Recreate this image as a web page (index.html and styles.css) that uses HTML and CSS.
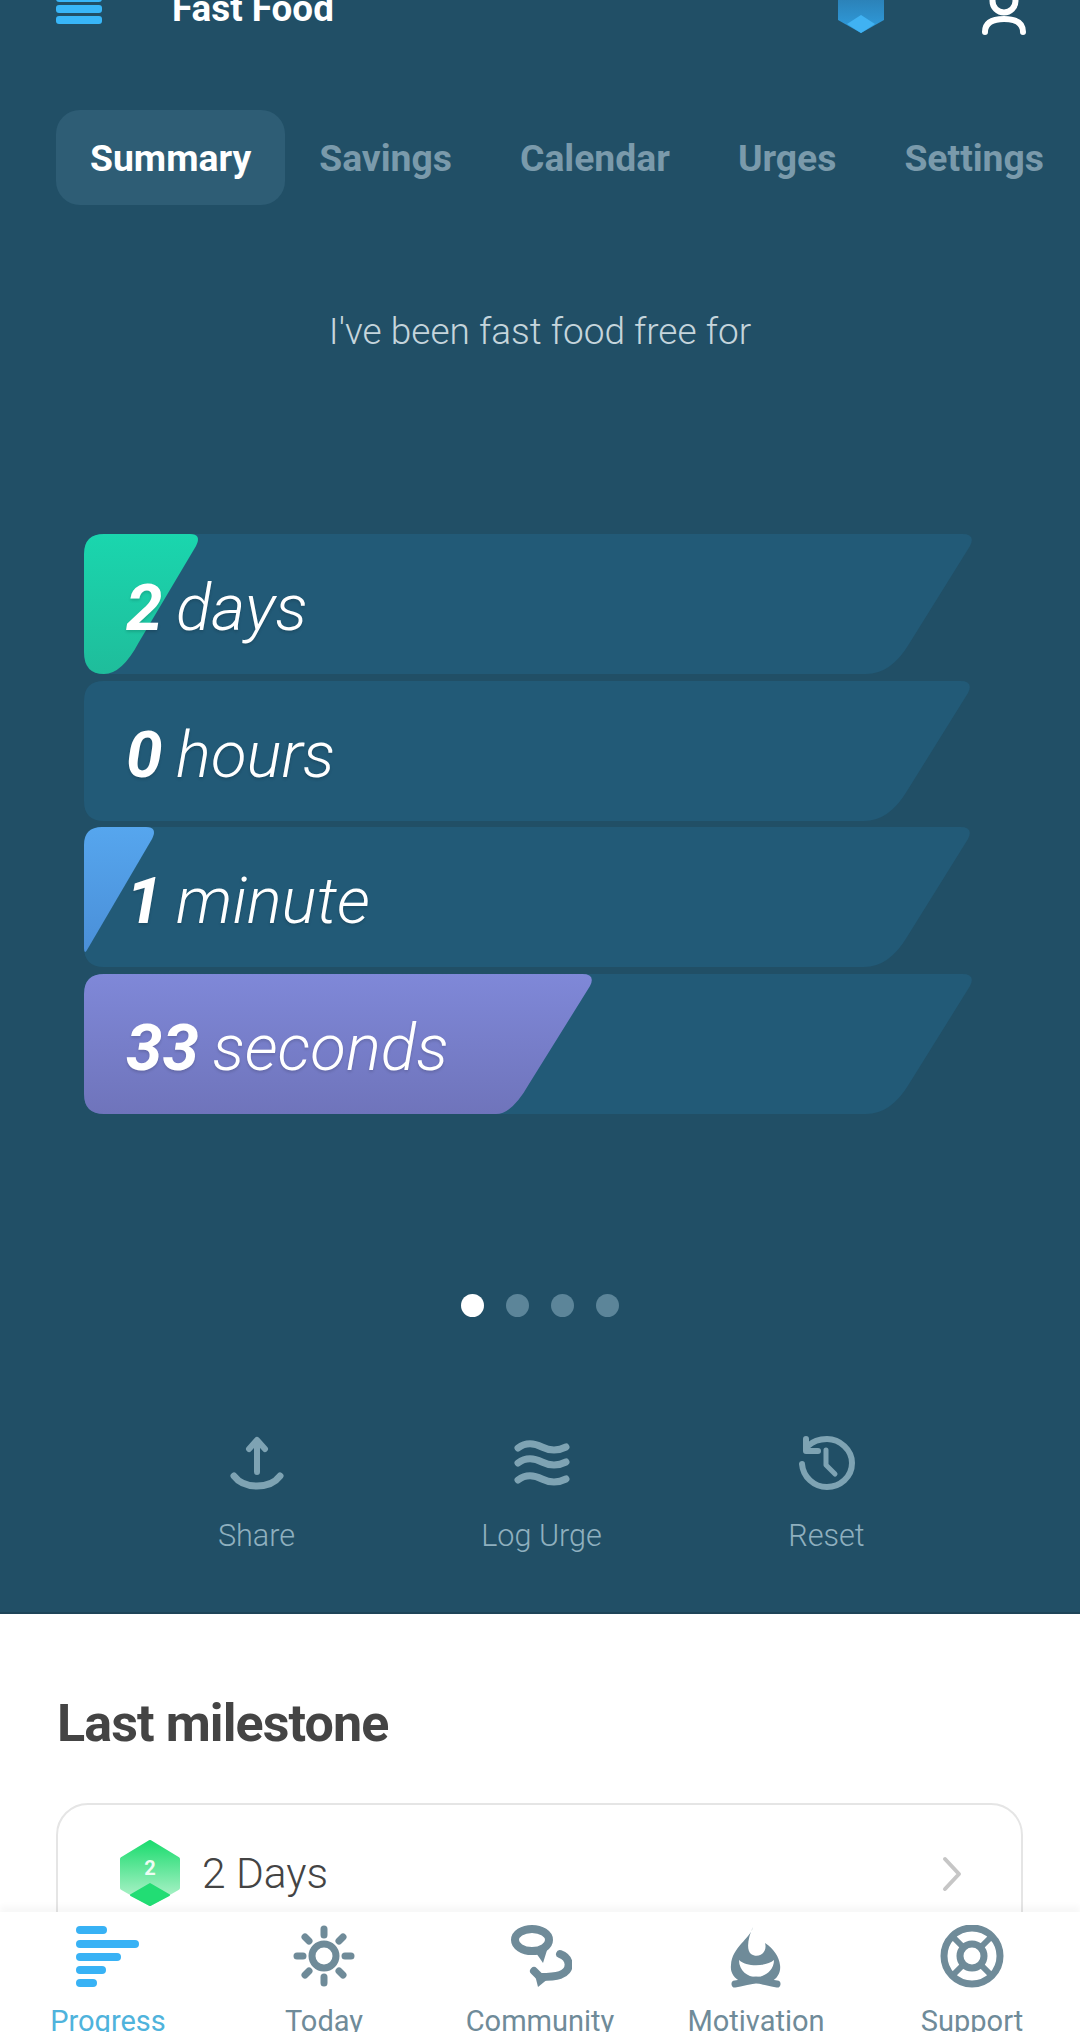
FILE: index.html
```html
<!DOCTYPE html>
<html>
<head>
  <title>Fast Food</title>
  <link rel="stylesheet" href="styles.css">
</head>
<body>
  <div class="screen">
    <section class="hero">
      <header class="topbar">
        <div class="menu-icon"><span></span><span></span><span></span></div>
        <div class="topbar-title">Fast Food</div>
        <svg class="shield-icon" width="46" height="33" viewBox="0 0 46 33">
          <defs>
            <linearGradient id="shieldGrad" x1="0" y1="0" x2="0" y2="1">
              <stop offset="0" stop-color="#2b7fb4"/>
              <stop offset="1" stop-color="#2f9ee0"/>
            </linearGradient>
          </defs>
          <path d="M0 -4H46V20L23 33L0 20Z" fill="url(#shieldGrad)"/>
          <path d="M23 15L37 24L23 33L9 24Z" fill="#40b2f2"/>
        </svg>
        <svg class="user-icon" width="46" height="36" viewBox="0 0 46 36" fill="none" stroke="#fff" stroke-width="6" stroke-linecap="round">
          <circle cx="23" cy="1" r="11.5"/>
          <path d="M4 32C4 22 12 19 23 19C34 19 42 22 42 32"/>
        </svg>
      </header>

      <nav class="tabs">
        <div class="tab tab-active">Summary</div>
        <div class="tab">Savings</div>
        <div class="tab">Calendar</div>
        <div class="tab">Urges</div>
        <div class="tab">Settings</div>
      </nav>

      <p class="intro">I've been fast food free for</p>

      <div class="bars">
        <div class="bar">
          <svg class="bar-bg" width="890" height="140" viewBox="0 0 890 140">
            <defs>
              <linearGradient id="greenGrad" x1="0" y1="0" x2="0" y2="1">
                <stop offset="0" stop-color="#1ad6ae"/>
                <stop offset="1" stop-color="#1fbd9b"/>
              </linearGradient>
              <linearGradient id="blueGrad" x1="0" y1="0" x2="0" y2="1">
                <stop offset="0" stop-color="#56a6ee"/>
                <stop offset="1" stop-color="#4a8fd8"/>
              </linearGradient>
              <linearGradient id="purpleGrad" x1="0" y1="0" x2="0" y2="1">
                <stop offset="0" stop-color="#7f88d8"/>
                <stop offset="1" stop-color="#6f74bb"/>
              </linearGradient>
            </defs>
            <path class="track" d="M0 20Q0 0 20 0H878Q892 0 886 12L825 110Q807 140 782 140H20Q0 140 0 120Z"/>
            <path class="fill-green" d="M0 20Q0 0 20 0H106Q118 0 112 12L55 108Q38 140 20 140Q0 140 0 118Z"/>
          </svg>
          <span class="num">2</span> <span class="unit">days</span>
        </div>
        <div class="bar">
          <svg class="bar-bg" width="890" height="140" viewBox="0 0 890 140">
            <path class="track" d="M0 20Q0 0 20 0H876Q890 0 884 12L823 110Q805 140 780 140H20Q0 140 0 120Z"/>
          </svg>
          <span class="num">0</span> <span class="unit">hours</span>
        </div>
        <div class="bar">
          <svg class="bar-bg" width="890" height="140" viewBox="0 0 890 140">
            <path class="track" d="M0 20Q0 0 20 0H876Q890 0 884 12L823 110Q805 140 780 140H20Q0 140 0 120Z"/>
            <path class="fill-blue" d="M0 18Q0 0 18 0H62Q74 0 68 12L3 123Q0 128 0 120Z"/>
          </svg>
          <span class="num">1</span> <span class="unit">minute</span>
        </div>
        <div class="bar">
          <svg class="bar-bg" width="890" height="140" viewBox="0 0 890 140">
            <path class="track" d="M0 20Q0 0 20 0H878Q892 0 886 12L825 110Q807 140 782 140H20Q0 140 0 120Z"/>
            <path class="fill-purple" d="M0 20Q0 0 20 0H498Q512 0 506 12L445 110Q428 140 412 140H20Q0 140 0 120Z"/>
          </svg>
          <span class="num">33</span> <span class="unit">seconds</span>
        </div>
      </div>

      <div class="dots">
        <span class="dot dot-active"></span>
        <span class="dot"></span>
        <span class="dot"></span>
        <span class="dot"></span>
      </div>

      <div class="actions">
        <div class="action">
          <svg width="56" height="54" viewBox="0 0 56 54" fill="none" stroke="#7ea3b3" stroke-width="6" stroke-linecap="round" stroke-linejoin="round">
            <path d="M28 36V5M20 13L28 4L36 13"/>
            <path d="M5 40C11 48 19 50 28 50C37 50 45 48 51 40" stroke-width="7"/>
          </svg>
          <span>Share</span>
        </div>
        <div class="action">
          <svg width="56" height="54" viewBox="0 0 56 54" fill="none" stroke="#7ea3b3" stroke-width="7" stroke-linecap="round">
            <path d="M4 12C12 6 20 7 28 11C36 15 44 15 52 11"/>
            <path d="M4 27C12 21 20 22 28 26C36 30 44 30 52 26"/>
            <path d="M4 44C12 38 20 39 28 43C36 47 44 47 52 43"/>
          </svg>
          <span>Log Urge</span>
        </div>
        <div class="action">
          <svg width="56" height="54" viewBox="0 0 56 54" fill="none" stroke="#7ea3b3" stroke-width="6" stroke-linecap="round" stroke-linejoin="round">
            <path d="M9 10C14 5 21 3 28 3C41 3 53 14 53 27C53 41 41 51 28 51C15 51 4 41 3 28"/>
            <path d="M7 3V15H19" stroke-width="6"/>
            <path d="M27 14V29L36 38" stroke-width="5"/>
          </svg>
          <span>Reset</span>
        </div>
      </div>
    </section>

    <section class="content">
      <h2 class="section-title">Last milestone</h2>
      <div class="milestone-card">
        <svg class="hex" width="60" height="66" viewBox="0 0 60 66">
          <defs>
            <linearGradient id="hexGrad" x1="0" y1="0" x2="0" y2="1">
              <stop offset="0" stop-color="#1edc70"/>
              <stop offset="1" stop-color="#bcf4d2"/>
            </linearGradient>
          </defs>
          <path d="M30 2L58 19V48L30 64L2 48V19Z" fill="url(#hexGrad)" stroke="url(#hexGrad)" stroke-width="4" stroke-linejoin="round"/>
          <path d="M30 44L49 55L30 65L11 55Z" fill="#22dd74" stroke="#22dd74" stroke-width="2" stroke-linejoin="round"/>
          <text x="30" y="35" class="hex-num">2</text>
        </svg>
        <span class="milestone-label">2 Days</span>
        <svg class="chevron" width="20" height="36" viewBox="0 0 20 36" fill="none" stroke="#c6c6c6" stroke-width="4" stroke-linecap="round" stroke-linejoin="round">
          <path d="M3 3L17 18L3 33"/>
        </svg>
      </div>
    </section>

    <nav class="bottom-nav">
      <div class="nav-item nav-active">
        <svg class="progress-icon" width="64" height="64" viewBox="0 0 64 64" fill="#38b2f5">
          <rect x="1" y="1" width="31" height="8" rx="4"/>
          <rect x="1" y="15" width="63" height="8" rx="4"/>
          <rect x="1" y="28" width="45" height="8" rx="4"/>
          <rect x="1" y="41" width="30" height="8" rx="4"/>
          <rect x="1" y="54" width="21" height="8" rx="4"/>
        </svg>
        <span>Progress</span>
      </div>
      <div class="nav-item">
        <svg width="64" height="64" viewBox="0 0 64 64" fill="none" stroke="#6f8b99" stroke-linecap="round">
          <circle cx="32" cy="31" r="12" stroke-width="7"/>
          <path stroke-width="7" d="M32 4V10M32 52V58M5 31H11M53 31H59M13 12L17 16M47 46L51 50M13 50L17 46M47 16L51 12"/>
        </svg>
        <span>Today</span>
      </div>
      <div class="nav-item">
        <svg width="64" height="64" viewBox="0 0 64 64">
          <ellipse cx="24" cy="15" rx="17" ry="11" fill="none" stroke="#6f8b99" stroke-width="8"/>
          <path d="M26 25L35 38L40 22Z" fill="#6f8b99"/>
          <path d="M52 29C63 33 64 46 52 50C46 52 38 52 32 52L26 46" fill="none" stroke="#6f8b99" stroke-width="8" stroke-linecap="round" stroke-linejoin="round"/>
          <path d="M27 50L30 62L41 53Z" fill="#6f8b99"/>
        </svg>
        <span>Community</span>
      </div>
      <div class="nav-item">
        <svg width="64" height="64" viewBox="0 0 64 64">
          <path fill="#6f8b99" d="M29 2C26 14 8 22 7 40C6 48 10 53 17 57H47C54 53 57 47 56 40C55 32 50 24 41 18C44 28 34 34 27 29C22 25 24 12 29 2Z"/>
          <path fill="#fff" d="M15 35C22 42 42 42 50 35C50 46 40 52 32 52C24 52 15 46 15 35Z"/>
          <path fill="none" stroke="#6f8b99" stroke-width="7" stroke-linecap="round" d="M11 59C20 58 26 55 32 55C38 55 44 58 53 59"/>
        </svg>
        <span>Motivation</span>
      </div>
      <div class="nav-item">
        <svg width="64" height="64" viewBox="0 0 64 64" fill="none" stroke="#6f8b99" stroke-width="7">
          <circle cx="32" cy="31" r="28"/>
          <circle cx="32" cy="31" r="12"/>
          <path stroke-width="6" d="M13 12L23 22M51 12L41 22M13 50L23 40M51 50L41 40"/>
        </svg>
        <span>Support</span>
      </div>
    </nav>
  </div>
</body>
</html>
```
FILE: styles.css
```css
* {
  box-sizing: border-box;
}

html, body {
  margin: 0;
  padding: 0;
}

body {
  font-family: Roboto, "Liberation Sans", sans-serif;
  background-color: #fff;
}

.screen {
  width: 1080px;
  height: 2032px;
  overflow: hidden;
  position: relative;
}

/* Dark top part */
.hero {
  height: 1614px;
  background-color: #214f66;
  padding-top: 1px;
  border-bottom: 2px solid #1d4458;
}

.topbar {
  height: 109px;
  display: flex;
  align-items: flex-start;
  padding: 0 53px 0 56px;
}

.menu-icon {
  width: 46px;
  margin-top: -7px;
  display: flex;
  flex-direction: column;
  gap: 3px;
}

.menu-icon span {
  height: 8px;
  border-radius: 3px;
  background-color: #38b6f8;
}

.topbar-title {
  margin-left: 70px;
  margin-top: -14px;
  font-size: 36.8px;
  line-height: 44px;
  font-weight: 700;
  color: #fff;
}

.shield-icon {
  margin-left: auto;
  margin-right: 97px;
  margin-top: -1px;
}

.user-icon {
  margin-top: -1px;
}

.tabs {
  height: 95px;
  display: flex;
  align-items: center;
  margin-left: 56px;
}

.tab {
  height: 95px;
  line-height: 97px;
  padding: 0 34px;
  font-size: 37.3px;
  font-weight: 700;
  white-space: nowrap;
  color: #7a9aab;
}

.tab-active {
  border-radius: 24px;
  background-color: #2e5d75;
  color: #fff;
}

.intro {
  margin: 105px 0 0;
  text-align: center;
  font-size: 37px;
  line-height: 44px;
  font-weight: 300;
  color: #c5d5dc;
}

.bars {
  margin: 180px 0 0 84px;
  display: flex;
  flex-direction: column;
  gap: 6.5px;
}

.bar {
  height: 140px;
  position: relative;
  padding: 0 0 0 42px;
  line-height: 148px;
  font-size: 65.5px;
  font-style: italic;
  color: #fff;
  text-shadow: 0 2px 3px rgba(0, 0, 0, 0.15);
}

.bar > span {
  position: relative;
}

.bar-bg {
  position: absolute;
  left: 0;
  top: 0;
}

.track {
  fill: #225a77;
}

.fill-green {
  fill: url(#greenGrad);
}

.fill-blue {
  fill: url(#blueGrad);
}

.fill-purple {
  fill: url(#purpleGrad);
}

.num {
  font-weight: 700;
}

.unit {
  font-weight: 300;
  margin-left: -2.5px;
}

.dots {
  margin-top: 180px;
  display: flex;
  justify-content: center;
  gap: 22px;
}

.dot {
  width: 23px;
  height: 23px;
  border-radius: 50%;
  background-color: #5c8599;
}

.dot-active {
  background-color: #fff;
}

.actions {
  margin-top: 119px;
  display: flex;
}

.action {
  width: 285px;
  display: flex;
  flex-direction: column;
  align-items: center;
  gap: 26px;
  font-size: 30.6px;
  line-height: 40px;
  font-weight: 300;
  color: #8fb0bf;
}

.action:first-child {
  margin-left: 114px;
}

/* White part */
.content {
  padding: 0 58px;
}

.section-title {
  margin: 75px 0 0 -1px;
  font-size: 52px;
  line-height: 70px;
  font-weight: 700;
  color: #444;
  letter-spacing: -0.9px;
}

.milestone-card {
  margin: 44px 0 0 -2px;
  width: 967px;
  height: 190px;
  padding: 35px 59px 0 62px;
  display: flex;
  align-items: flex-start;
  border: 2px solid #e5e5e5;
  border-radius: 32px;
}

.hex-num {
  font-size: 20px;
  font-weight: 700;
  fill: #eefcf3;
  text-anchor: middle;
}

.milestone-label {
  margin-left: 22px;
  margin-top: 4px;
  font-size: 42.5px;
  line-height: 60px;
  font-weight: 300;
  color: #444;
}

.chevron {
  margin-left: auto;
  margin-top: 16px;
}

/* Bottom tab bar, sits on top of the card */
.bottom-nav {
  position: absolute;
  left: 0;
  right: 0;
  top: 1912px;
  height: 120px;
  display: flex;
  background-color: #fff;
  box-shadow: 0 -6px 6px rgba(0, 0, 0, 0.03);
}

.nav-item {
  width: 216px;
  padding-top: 13px;
  display: flex;
  flex-direction: column;
  align-items: center;
  gap: 12px;
  font-size: 29px;
  line-height: 40px;
  color: #6f8b99;
  flex-shrink: 0;
}

.nav-item svg,
.nav-item span {
  flex-shrink: 0;
}

.progress-icon {
  margin-left: -2px;
}

.nav-active {
  color: #4fb3dc;
}
```
